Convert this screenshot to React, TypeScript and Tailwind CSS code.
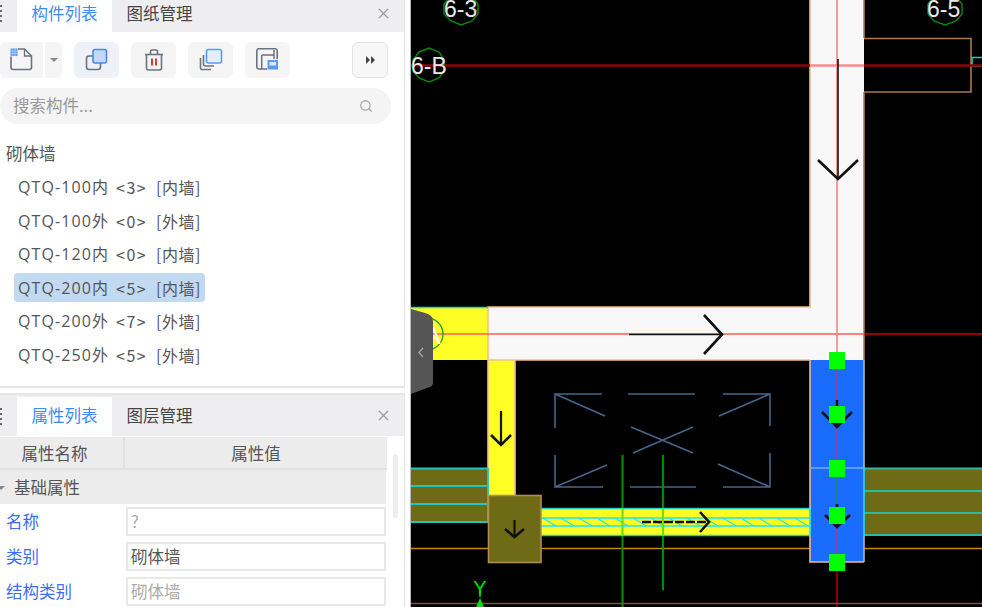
import React from 'react';
import { Search, X } from 'lucide-react';

const components = [
  { name: 'QTQ-100内', count: 3, kind: '内墙' },
  { name: 'QTQ-100外', count: 0, kind: '外墙' },
  { name: 'QTQ-120内', count: 0, kind: '内墙' },
  { name: 'QTQ-200内', count: 5, kind: '内墙', selected: true },
  { name: 'QTQ-200外', count: 7, kind: '外墙' },
  { name: 'QTQ-250外', count: 5, kind: '外墙' },
];

const Grip = () => (
  <svg width="4" height="18" viewBox="0 0 4 18" className="shrink-0">
    <rect x="0" y="1" width="2" height="2" fill="#666" />
    <rect x="0" y="6" width="2" height="2" fill="#666" />
    <rect x="0" y="11" width="2" height="2" fill="#666" />
    <rect x="0" y="16" width="2" height="2" fill="#666" />
  </svg>
);

const TabBar = ({ active, other, tall }: { active: string; other: string; tall?: boolean }) => (
  <div className={`flex items-center bg-[#eeeef0] shrink-0 ${tall ? 'h-[41px] pt-px' : 'h-[32px]'}`}>
    <div className={`w-[17px] shrink-0 flex items-center ${tall ? '' : 'pb-[6px]'}`}>
      <Grip />
    </div>
    <div className={`w-[95px] bg-white text-[#3b8cf5] text-[16.5px] flex items-center justify-center ${tall ? 'h-[39px] pb-[2px]' : 'h-full pb-[6px]'}`}>
      {active}
    </div>
    <div className={`w-[95px] text-[#444] text-[16.5px] flex items-center justify-center ${tall ? 'pb-[2px]' : 'pb-[6px]'}`}>
      {other}
    </div>
    <X size={17} strokeWidth={1.6} className={`ml-auto mr-[12px] text-[#999] ${tall ? 'mb-[2px]' : 'mb-[6px]'}`} />
  </div>
);

const ToolButton = ({ children, active }: { children: React.ReactNode; active?: boolean }) => (
  <div className={`w-[45px] h-[36px] rounded-md flex items-center justify-center ${active ? 'bg-[#eef2f8]' : 'bg-[#f5f5f6]'}`}>
    {children}
  </div>
);

const Toolbar = () => (
  <div className="flex items-center h-[36px] mt-[10px] shrink-0">
    <div className="w-[43px] h-[36px] rounded-l-md bg-[#f5f5f6] flex items-center justify-center">
      <svg width="24" height="24" viewBox="0 0 24 24" fill="none">
        <path d="M1 8.5V19.5a2 2 0 0 0 2 2H19.5a2 2 0 0 0 2-2V8L14.5 1H8" stroke="#6b7280" strokeWidth="1.6" />
        <path d="M14.5 1V8H21.5" stroke="#6b7280" strokeWidth="1.3" />
        <rect x="0.5" y="0.5" width="7" height="7.5" fill="#5b9bf0" />
        <path d="M2.8 0.5V8M5.2 0.5V8M0.5 3H7.5M0.5 5.5H7.5" stroke="#c5dcfa" strokeWidth="0.6" />
      </svg>
    </div>
    <div className="w-[17px] h-[36px] ml-[2px] rounded-r-md bg-[#f5f5f6] flex items-center justify-center">
      <div className="w-0 h-0 border-x-[4px] border-x-transparent border-t-[4px] border-t-[#888]" />
    </div>
    <div className="ml-[12px] flex gap-[12px]">
      <ToolButton active>
        <svg width="24" height="24" viewBox="0 0 24 24" fill="none">
          <rect x="1.5" y="8" width="14" height="13.5" rx="2.5" stroke="#6b7280" strokeWidth="1.6" />
          <rect x="8" y="1.5" width="13.5" height="13.5" rx="2" fill="#c5d9f7" stroke="#3f8cf5" strokeWidth="1.6" />
        </svg>
      </ToolButton>
      <ToolButton>
        <svg width="24" height="24" viewBox="0 0 24 24" fill="none" stroke="#6b7280" strokeWidth="1.6">
          <path d="M3 6.5H21" />
          <path d="M8.5 6V3.5A1.5 1.5 0 0 1 10 2h4a1.5 1.5 0 0 1 1.5 1.5V6" />
          <path d="M4.5 6.5V20A2 2 0 0 0 6.5 22H17.5A2 2 0 0 0 19.5 20V6.5" />
          <path d="M10 10.5V17.5M14 10.5V17.5" stroke="#e02424" strokeWidth="1.8" />
        </svg>
      </ToolButton>
      <ToolButton>
        <svg width="24" height="24" viewBox="0 0 24 24" fill="none">
          <path d="M1.5 10V20a1.5 1.5 0 0 0 1.5 1.5H12" stroke="#6b7280" strokeWidth="1.6" />
          <path d="M4.5 7V16a2 2 0 0 0 2 2H15" stroke="#6b7280" strokeWidth="1.6" />
          <rect x="7.5" y="1.5" width="15" height="13.5" rx="2" fill="#e3eeff" stroke="#5a9bf5" strokeWidth="1.6" />
        </svg>
      </ToolButton>
      <ToolButton>
        <svg width="24" height="24" viewBox="0 0 24 24" fill="none">
          <path d="M11 21H2.5A2 2 0 0 1 0.8 19V2.5A2 2 0 0 1 2.5 0.8H19.5A2 2 0 0 1 21.2 2.5V11" stroke="#6b7280" strokeWidth="1.6" />
          <path d="M5.7 7H18M5.7 7V21M18 2V11" stroke="#6b7280" strokeWidth="1.5" />
          <rect x="11.5" y="12" width="10.5" height="9.5" fill="#5b9bf0" />
          <rect x="13.5" y="14" width="6.5" height="3.5" fill="#dbe8fb" />
        </svg>
      </ToolButton>
    </div>
    <div className="ml-[62px] w-[36px] h-[36px] rounded-md border border-[#e2e2e4] bg-[#f7f7f8] flex items-center justify-center gap-px">
      <div className="w-0 h-0 border-y-[4px] border-y-transparent border-l-[4px] border-l-[#444]" />
      <div className="w-0 h-0 border-y-[4px] border-y-transparent border-l-[4px] border-l-[#444]" />
    </div>
  </div>
);

const PropRow = ({ label, value, dim }: { label: string; value: string; dim?: boolean }) => (
  <div className="flex items-center h-[35px] shrink-0">
    <span className="w-[126px] pl-[6px] text-[#3b6ef5] text-[16.5px]">{label}</span>
    <div className={`w-[260px] h-[29px] border-2 border-[#e8e8e8] bg-white flex items-center pl-[3px] text-[16.5px] ${dim ? 'text-[#aaa]' : 'text-[#555]'}`}>
      {value}
    </div>
  </div>
);

const CadCanvas = () => (
  <svg viewBox="411 0 571 607" className="block w-full h-full" fontFamily="'Liberation Sans', sans-serif">
    {/* walls */}
    <rect x="810" y="0" width="54" height="360" fill="#f8f8f8" />
    <rect x="488" y="307" width="322" height="53" fill="#f8f8f8" />
    <rect x="810" y="307" width="54" height="53" fill="#f8f8f8" />
    <rect x="411" y="308" width="77" height="52" fill="#ffff26" />
    <rect x="488" y="360" width="27" height="135" fill="#ffff26" />
    <path d="M810 0V307H488V495M515 360V495M488 360H810" fill="none" stroke="#f5bd8c" strokeWidth="1.6" />
    <path d="M864 0V38M864 92V360" fill="none" stroke="#ad7c4c" strokeWidth="1.6" />
    <path d="M411 307.5H488" stroke="#19d6d6" strokeWidth="1.6" />

    <path d="M864 38.5H971V92H864" fill="none" stroke="#a87a4c" strokeWidth="1.6" />
    <path d="M982 57.5H972V66H982" fill="none" stroke="#19c8c8" strokeWidth="1.6" />

    {/* olive wall strips */}
    <rect x="411" y="468" width="77" height="54" fill="#6e6a16" />
    <path d="M411 468.5H488M411 486H488M411 504H488M411 522H488M488 468V522" fill="none" stroke="#1fc7bd" strokeWidth="1.8" />
    <rect x="864" y="468" width="118" height="67" fill="#6e6a16" />
    <path d="M864 468.5H982M864 491H982M864 513H982M864 535H982" fill="none" stroke="#2fb8a0" strokeWidth="1.8" />

    {/* orange line */}
    <path d="M411 548.5H982" stroke="#c48c00" strokeWidth="1.5" />

    {/* yellow beam */}
    <rect x="541" y="508" width="269" height="28" fill="#ffff26" />
    <path d="M541 508.5H810M541 535.5H810" stroke="#1fd0c0" strokeWidth="1.6" />
    <path d="M541 518H810M541 526H810" stroke="#19e6f0" strokeWidth="1.5" />
    <path
      d="M543 518L556 526M561 518L574 526M579 518L592 526M597 518L610 526M615 518L628 526M633 518L646 526M651 518L664 526M669 518L682 526M687 518L700 526M705 518L718 526M723 518L736 526M741 518L754 526M759 518L772 526M777 518L790 526M795 518L808 526"
      stroke="#19e6f0"
      strokeWidth="1.2"
    />

    {/* olive column */}
    <rect x="488.5" y="495.5" width="52.5" height="67" fill="#6e6a16" stroke="#b48c50" strokeWidth="1.6" />

    {/* window symbol */}
    <path
      d="M555 428V394H602M555 394L605 416M628 394H695M723 394H770V426M770 394L719 416M631 427L693 453M633 453L693 427M555 455V487H603M555 487L607 465M630 487H696M723 487H770V453M770 487L718 464"
      fill="none"
      stroke="#46658a"
      strokeWidth="1.6"
    />

    {/* green lines */}
    <path d="M622.5 455V508M622.5 536V607M663 455V508M663 536V590" stroke="#008c00" strokeWidth="2.2" />
    <path d="M622.5 508V536M663 508V536" stroke="#66e010" strokeWidth="2.2" />

    {/* blue selected column */}
    <rect x="810" y="360" width="54" height="202" fill="#1a6cff" />
    <path d="M810 360V562H864" fill="none" stroke="#f0b98c" strokeWidth="1.6" />
    <path d="M864 360V468" stroke="#b4b4c8" strokeWidth="1.6" />
    <path d="M864 468V535" stroke="#1fe0ff" strokeWidth="1.6" />
    <path d="M864 535V562" stroke="#b4b4c8" strokeWidth="1.6" />
    <path d="M810 468H864" stroke="#7aa8ff" strokeWidth="1.6" />
    <path d="M810 508V536" stroke="#1fe0ff" strokeWidth="1.6" />

    {/* axis lines */}
    <path d="M411 65.5H810M864 65.5H982" stroke="#8b0505" strokeWidth="2.4" />
    <path d="M810 65.5H864" stroke="#ff8a8a" strokeWidth="2.4" />
    <path d="M411 334H864" stroke="#ff5a5a" strokeWidth="1.6" />
    <path d="M864 334H982" stroke="#c80000" strokeWidth="1.4" />
    <path d="M837 0V360" stroke="#ff8080" strokeWidth="1.6" />
    <path d="M837 360V468M837 515V562" stroke="#a83c84" strokeWidth="1.6" />
    <path d="M837 468V515" stroke="#1a8a70" strokeWidth="1.6" />
    <path d="M837 562V607" stroke="#a80000" strokeWidth="1.6" />
    <path d="M411 603.5H982" stroke="#8a4848" strokeWidth="1.5" />

    {/* axis bubbles */}
    <polygon points="451,-3 461,-8 472,-3 478,4 478,14 472,21 461,25 451,21 444,14 444,4" fill="none" stroke="#0a8a0a" strokeWidth="1.4" />
    <text x="444" y="17" fill="#e8e8e8" fontSize="23">6-3</text>
    <polygon points="934,-3 945,-8 956,-3 962,4 962,14 956,21 945,25 934,21 928,14 928,4" fill="none" stroke="#0a8a0a" strokeWidth="1.4" />
    <text x="927" y="17" fill="#e8e8e8" fontSize="23">6-5</text>
    <polygon points="419,52 429,48 439,52 444,60 444,71 439,78 429,82 419,78 413,71 413,60" fill="none" stroke="#0a8a0a" strokeWidth="1.4" />
    <text x="411" y="74" fill="#e8e8e8" fontSize="23">6-B</text>
    <circle cx="427" cy="334" r="16" fill="none" stroke="#2aa02a" strokeWidth="1.4" />
    <text x="433" y="344" fill="#fff" fontSize="23" textAnchor="middle">A</text>

    {/* wall direction arrows */}
    <g fill="none" stroke="#111" strokeWidth="2.6">
      <path d="M838 59V179" strokeWidth="1.6" />
      <path d="M818 160L838 179L858 160" />
      <path d="M629 334.5H722" strokeWidth="1.6" />
      <path d="M704 315L722 334.5L704 354" />
      <path d="M501 411V445" strokeWidth="2.2" />
      <path d="M491 435L501 445L511 435" />
      <path d="M514.5 520V537" strokeWidth="2.2" />
      <path d="M505 529L514.5 537L524 529" />
      <path d="M642 522H708" strokeDasharray="9 2" />
      <path d="M700 512L709 522L700 532" />
      <path d="M822 412L837 427L852 412M837 400V427" />
      <path d="M825 515L837 527L850 515M837 504V527" />
    </g>

    {/* grip points */}
    <g fill="#00ff00">
      <rect x="829" y="352" width="16" height="17" />
      <rect x="829" y="406" width="16" height="17" />
      <rect x="829" y="460" width="16" height="17" />
      <rect x="829" y="507" width="16" height="17" />
      <rect x="829" y="554" width="16" height="17" />
    </g>

    {/* ucs marker */}
    <path d="M480 597V590" stroke="#00e000" strokeWidth="1.5" />
    <text x="480" y="595" fill="#00e000" fontSize="20" textAnchor="middle">Y</text>
    <polygon points="480,598 476,607 484,607" fill="#00e000" />
  </svg>
);

export default function App() {
  return (
    <div className="w-[982px] h-[607px] flex overflow-hidden bg-white font-['Noto_Sans_CJK_SC','Liberation_Sans',sans-serif]">
      <div className="w-[410px] h-full shrink-0 flex flex-col pr-[5px] bg-white">
        <div className="h-[388px] shrink-0 flex flex-col border-r border-b-2 border-[#e6e6e6]">
          <TabBar active="构件列表" other="图纸管理" />
          <Toolbar />
          <div className="mt-[10px] w-[391px] h-[36px] shrink-0 rounded-full bg-[#f4f4f5] flex items-center pl-[13px] pr-[18px] pb-px text-[16.5px] text-[#999]">
            <span>搜索构件...</span>
            <Search size={14} strokeWidth={2.2} className="ml-auto text-[#aaa]" />
          </div>
          <div className="mt-[13px] pl-[6px] h-[33px] flex items-center text-[16.5px] text-[#555]">砌体墙</div>
          <div className="flex flex-col mt-[0.5px]">
            {components.map((c) => (
              <div key={c.name} className="h-[33.5px] flex items-center pl-[14px]">
                <div className={`w-[191px] h-[29px] rounded flex items-center pl-[4px] text-[16px] text-[#555] whitespace-pre ${c.selected ? 'bg-[#c2d9f2]' : ''}`}>
                  <span className="w-[98px] tracking-[1.1px] font-['Open_Sans','Noto_Sans_CJK_SC',sans-serif]">{c.name}</span>
                  <span className="w-[40px] tracking-[1.5px]">{`<${c.count}>`}</span>
                  <span className="tracking-[0.5px]">{`[${c.kind}]`}</span>
                </div>
              </div>
            ))}
          </div>
        </div>
        <div className="mt-[5px] flex-1 min-h-0 flex flex-col overflow-hidden border-t-2 border-r border-[#e6e6e6]">
          <TabBar active="属性列表" other="图层管理" tall />
          <div className="relative flex-1 min-h-0 pt-px">
            <div className="w-[387px] h-[33px] flex bg-[#ececec] border-b-2 border-[#e0e0e0] text-[16.5px] text-[#555]">
              <div className="w-[125px] pt-px flex items-center justify-center border-r-2 border-[#e0e0e0] pr-[14px]">属性名称</div>
              <div className="flex-1 pt-px flex items-center justify-center">属性值</div>
            </div>
            <div className="w-[386px] h-[34px] pt-px flex items-center gap-[6px] bg-[#ececec] text-[16.5px] text-[#555]">
              <div className="w-0 h-0 -ml-[3px] border-x-[4px] border-x-transparent border-t-[4px] border-t-[#888]" />
              <span className="ml-[3px]">基础属性</span>
            </div>
            <div className="flex flex-col">
              <PropRow label="名称" value="?" dim />
              <PropRow label="类别" value="砌体墙" />
              <PropRow label="结构类别" value="砌体墙" dim />
            </div>
            <div className="absolute left-[393px] top-[18px] w-[5px] h-[64px] rounded-full bg-[#eeeeee]" />
          </div>
        </div>
      </div>
      <div className="relative flex-1 h-full bg-black border-l border-[#b8b8b8]">
        <CadCanvas />
        <div className="absolute left-0 top-[309px] w-[22px] h-[86px]">
          <svg width="22" height="86" viewBox="0 0 22 86">
            <path d="M0 0L14 4Q22 6 22 12V74Q22 78 16 79L0 85Z" fill="#555555" />
            <path d="M12 39L8 43.5L12 48" fill="none" stroke="#a0a0a0" strokeWidth="1.5" />
          </svg>
        </div>
      </div>
    </div>
  );
}
